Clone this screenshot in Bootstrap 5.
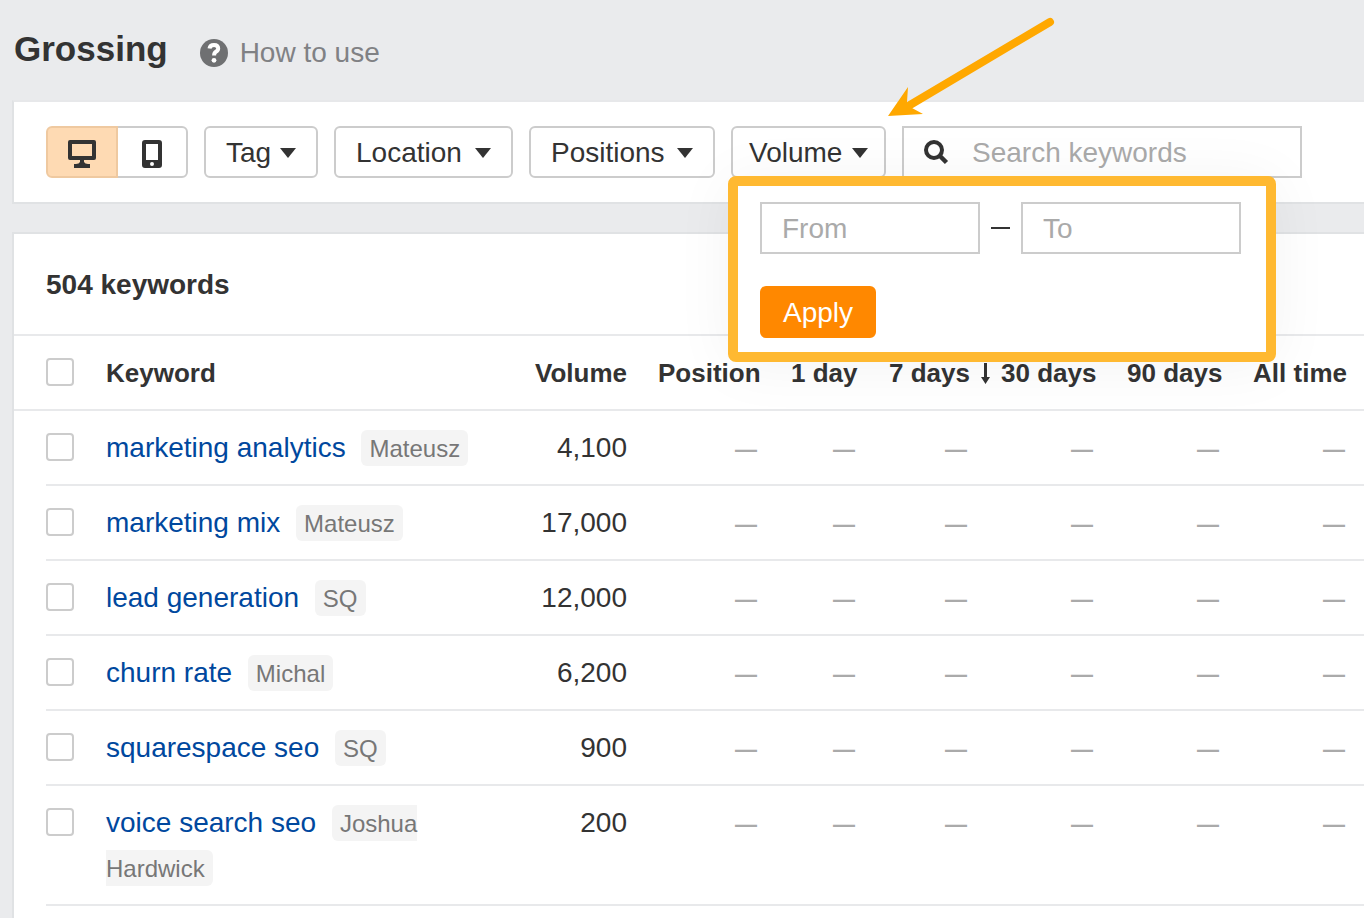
<!DOCTYPE html>
<html lang="en">
<head>
<meta charset="utf-8">
<meta name="viewport" content="width=device-width, initial-scale=1">
<title>Grossing – keywords</title>
<link href="https://cdn.jsdelivr.net/npm/bootstrap@5.3.0/dist/css/bootstrap.min.css" rel="stylesheet">
<style>
body { background: #eaebed; color: #333; font: 28px/44px "Liberation Sans", Arial, sans-serif; overflow-x: hidden; }
.page-head { height: 100px; padding: 28px 14px 0; gap: 32px; }
.page-head h1 { font-size: 35px; line-height: 42px; font-weight: 700; }
.help-link { color: #808184; gap: 12px; line-height: 50px; }
.panel { background: #fff; border: 2px solid #e0e2e4; border-right: 0; margin-left: 12px; }
.toolbar { padding: 24px 32px; gap: 16px; border-top-color: #e7e8ea; margin-bottom: 28px; }
.tool-btn { --bs-btn-color: #333; --bs-btn-bg: #fff; --bs-btn-border-color: #ccc; --bs-btn-border-width: 2px; --bs-btn-border-radius: 6px;
  --bs-btn-padding-x: 20px; --bs-btn-padding-y: 0; --bs-btn-font-size: 28px; --bs-btn-line-height: 46px; height: 52px; padding-top: 2px; }
.device-group .btn { width: 72px; padding: 4px 0 0; }
.device-group .btn:last-child { width: 71px; border-left-width: 1px; }
.device-group .btn-check:checked + .btn { background: #fedab3; border-color: #efc9a0; color: #333; z-index: 1; }
.w-tag { width: 114px; } .w-location { width: 179px; } .w-positions { width: 186px; }
.w-volume { width: 155px; --bs-btn-padding-x: 16px; }
.field { border: 2px solid #ccc; border-radius: 0; height: 52px; padding: 2px 20px 0; font-size: 28px; line-height: 46px; color: #333; }
.field::placeholder { color: #aaa; opacity: 1; }
.search-box { width: 400px; }
.search-box .field { padding-left: 68px; }
.search-box svg { left: 20px; top: 12px; }
.volume-menu { top: 50px; left: -3px; width: 548px; background: #fff; border: 10px solid #ffb931; border-radius: 8px; padding: 16px 22px 14px; box-shadow: 0 4px 60px rgba(0,0,0,.05); z-index: 5; }
.range-row { gap: 11px; margin-bottom: 32px; }
.range-row .field { width: 220px; }
.range-dash { width: 19px; height: 2px; background: #333; }
.apply-btn { --bs-btn-color: #fff; --bs-btn-bg: #ff8800; --bs-btn-border-color: #ff8800; --bs-btn-hover-bg: #f07f00; --bs-btn-hover-color: #fff; width: 116px; }
.pointer-arrow { left: 154px; top: -112px; pointer-events: none; }
.count-head { font-size: 28px; font-weight: 700; line-height: 102px; height: 102px; padding-left: 32px; border-bottom: 2px solid #e8e9eb; }
.kw-table { table-layout: fixed; border-collapse: separate; border-spacing: 0; --bs-table-bg: transparent; --bs-table-color: #333; color: #333; }
.kw-table > :not(caption) > * > * { padding: 14px 16px; line-height: 45px; text-align: right; vertical-align: top; border-bottom: 2px solid #e8e9eb; white-space: nowrap; box-shadow: none; }
.kw-table > thead > tr > th { font-size: 26px; padding: 15px 17px 13px 15px; }
.kw-table > :not(caption) > * > :nth-child(2) { text-align: left; white-space: normal; padding-left: 16px; }
.kw-table > :not(caption) > * > :first-child { padding: 14px 16px 14px 32px; text-align: left; }
.kw-table > tbody > tr > :first-child { border-bottom-color: transparent; background: linear-gradient(#e8e9eb, #e8e9eb) 32px 100% / 100% 2px no-repeat border-box; }
.c-check { width: 76px; } .c-vol { width: 123px; } .c-pos { width: 133px; } .c-1 { width: 98px; } .c-7 { width: 112px; } .c-n { width: 126px; }
.kw-table .form-check-input { width: 28px; height: 28px; margin: 8px 0 0; border: 2px solid #ccc; border-radius: 4px; display: block; }
.kw-table a { color: #00489e; text-decoration: none; }
.kw-tag { background: #f4f4f4; color: #777; font-size: 24px; line-height: 24px; padding: 5px 8px 4px; border-radius: 6px; margin-left: 8px; }
.none { color: #aaa; font-size: 22px; font-weight: 700; line-height: 24px; padding-right: 3px; }
.sort-arrow { left: 100%; top: 5px; margin-left: 8px; }
</style>
</head>
<body class="d-flex flex-column min-vh-100">
<header class="page-head d-flex align-items-start">
  <h1 class="m-0">Grossing</h1>
  <a href="#" class="help-link d-flex align-items-center text-decoration-none">
    <svg width="28" height="28" viewBox="0 0 28 28" aria-hidden="true"><circle cx="14" cy="14" r="14" fill="#6f7072"/><path d="M9.500 9.600Q10 5.900 14 5.900Q18.200 5.900 18.200 9.500Q18.200 11.400 15.900 12.800Q14.100 13.900 14.100 16.600" fill="none" stroke="#fff" stroke-width="4"/><circle cx="14" cy="21.300" r="2.400" fill="#fff"/></svg>
    <span>How to use</span>
  </a>
</header>

<section class="panel toolbar d-flex" aria-label="Filters">
  <div class="btn-group device-group" role="group" aria-label="Device">
    <input type="radio" class="btn-check" name="device" id="desktop" checked>
    <label class="btn tool-btn" for="desktop" aria-label="Desktop"><svg class="d-block mx-auto mt-2" width="28" height="28" viewBox="0 0 28 28" fill="#333"><path fill-rule="evenodd" d="M2 0H26Q28 0 28 2V18Q28 20 26 20H16V22Q17 24 20 24H22V28H6V24H8Q11 24 12 22V20H2Q0 20 0 18V2Q0 0 2 0ZM4 4V16H24V4Z"/></svg></label>
    <input type="radio" class="btn-check" name="device" id="mobile">
    <label class="btn tool-btn" for="mobile" aria-label="Mobile"><svg class="d-block mx-auto mt-2" width="20" height="28" viewBox="0 0 20 28" fill="#333"><path fill-rule="evenodd" d="M3 0H17Q20 0 20 3V25Q20 28 17 28H3Q0 28 0 25V3Q0 0 3 0ZM4 4V20H16V4ZM10 22A2 2 0 1 0 10 26A2 2 0 1 0 10 22Z"/></svg></label>
  </div>
  <button type="button" class="btn tool-btn w-tag d-flex align-items-center justify-content-between">Tag<svg width="16" height="10" fill="#333"><path d="M0 0H16L8 10Z"/></svg></button>
  <button type="button" class="btn tool-btn w-location d-flex align-items-center justify-content-between">Location<svg width="16" height="10" fill="#333"><path d="M0 0H16L8 10Z"/></svg></button>
  <button type="button" class="btn tool-btn w-positions d-flex align-items-center justify-content-between">Positions<svg width="16" height="10" fill="#333"><path d="M0 0H16L8 10Z"/></svg></button>
  <div class="position-relative">
    <button type="button" class="btn tool-btn w-volume d-flex align-items-center justify-content-between" aria-expanded="true">Volume<svg width="16" height="10" fill="#333"><path d="M0 0H16L8 10Z"/></svg></button>
    <form class="volume-menu position-absolute">
      <div class="range-row d-flex align-items-center">
        <input class="field" type="text" placeholder="From" aria-label="Volume from">
        <span class="range-dash"></span>
        <input class="field" type="text" placeholder="To" aria-label="Volume to">
      </div>
      <button type="button" class="btn tool-btn apply-btn">Apply</button>
    </form>
    <svg class="pointer-arrow position-absolute" width="172" height="106" viewBox="0 0 172 106" aria-hidden="true"><path d="M165 8L25 91" stroke="#ffa800" stroke-width="8" stroke-linecap="round"/><path d="M3 102L23 73L22 88L27 94L38 100Z" fill="#ffa800"/></svg>
  </div>
  <div class="search-box position-relative">
    <svg class="position-absolute" width="28" height="28" viewBox="0 0 28 28" fill="none" stroke="#333" aria-hidden="true"><circle cx="12" cy="12" r="8" stroke-width="4"/><path d="M17.500 17.500L24.500 24.500" stroke-width="4.500"/></svg>
    <input class="field w-100" type="search" placeholder="Search keywords" aria-label="Search keywords">
  </div>
</section>

<main class="panel flex-grow-1 border-bottom-0">
  <h2 class="count-head m-0">504 keywords</h2>
  <table class="table kw-table mb-0">
    <colgroup><col class="c-check"><col><col class="c-vol"><col class="c-pos"><col class="c-1"><col class="c-7"><col class="c-n"><col class="c-n"><col class="c-n"></colgroup>
    <thead>
      <tr><th><input class="form-check-input" type="checkbox" aria-label="Select all"></th><th>Keyword</th><th>Volume</th><th>Position</th><th>1 day</th><th><span class="position-relative">7 days<svg class="sort-arrow position-absolute" width="14" height="22" viewBox="0 0 14 22" fill="#333"><path d="M6 0H9V14H12L7.500 21L3 14H6Z"/></svg></span></th><th>30 days</th><th>90 days</th><th>All time</th></tr>
    </thead>
    <tbody>
      <tr><td><input class="form-check-input" type="checkbox" aria-label="Select marketing analytics"></td><td><a href="#">marketing analytics</a> <span class="kw-tag">Mateusz</span></td><td>4,100</td><td><span class="none">—</span></td><td><span class="none">—</span></td><td><span class="none">—</span></td><td><span class="none">—</span></td><td><span class="none">—</span></td><td><span class="none">—</span></td></tr>
      <tr><td><input class="form-check-input" type="checkbox" aria-label="Select marketing mix"></td><td><a href="#">marketing mix</a> <span class="kw-tag">Mateusz</span></td><td>17,000</td><td><span class="none">—</span></td><td><span class="none">—</span></td><td><span class="none">—</span></td><td><span class="none">—</span></td><td><span class="none">—</span></td><td><span class="none">—</span></td></tr>
      <tr><td><input class="form-check-input" type="checkbox" aria-label="Select lead generation"></td><td><a href="#">lead generation</a> <span class="kw-tag">SQ</span></td><td>12,000</td><td><span class="none">—</span></td><td><span class="none">—</span></td><td><span class="none">—</span></td><td><span class="none">—</span></td><td><span class="none">—</span></td><td><span class="none">—</span></td></tr>
      <tr><td><input class="form-check-input" type="checkbox" aria-label="Select churn rate"></td><td><a href="#">churn rate</a> <span class="kw-tag">Michal</span></td><td>6,200</td><td><span class="none">—</span></td><td><span class="none">—</span></td><td><span class="none">—</span></td><td><span class="none">—</span></td><td><span class="none">—</span></td><td><span class="none">—</span></td></tr>
      <tr><td><input class="form-check-input" type="checkbox" aria-label="Select squarespace seo"></td><td><a href="#">squarespace seo</a> <span class="kw-tag">SQ</span></td><td>900</td><td><span class="none">—</span></td><td><span class="none">—</span></td><td><span class="none">—</span></td><td><span class="none">—</span></td><td><span class="none">—</span></td><td><span class="none">—</span></td></tr>
      <tr><td><input class="form-check-input" type="checkbox" aria-label="Select voice search seo"></td><td><a href="#">voice search seo</a> <span class="kw-tag">Joshua Hardwick</span></td><td>200</td><td><span class="none">—</span></td><td><span class="none">—</span></td><td><span class="none">—</span></td><td><span class="none">—</span></td><td><span class="none">—</span></td><td><span class="none">—</span></td></tr>
    </tbody>
  </table>
</main>
<script src="https://cdn.jsdelivr.net/npm/bootstrap@5.3.0/dist/js/bootstrap.bundle.min.js"></script>
</body>
</html>
